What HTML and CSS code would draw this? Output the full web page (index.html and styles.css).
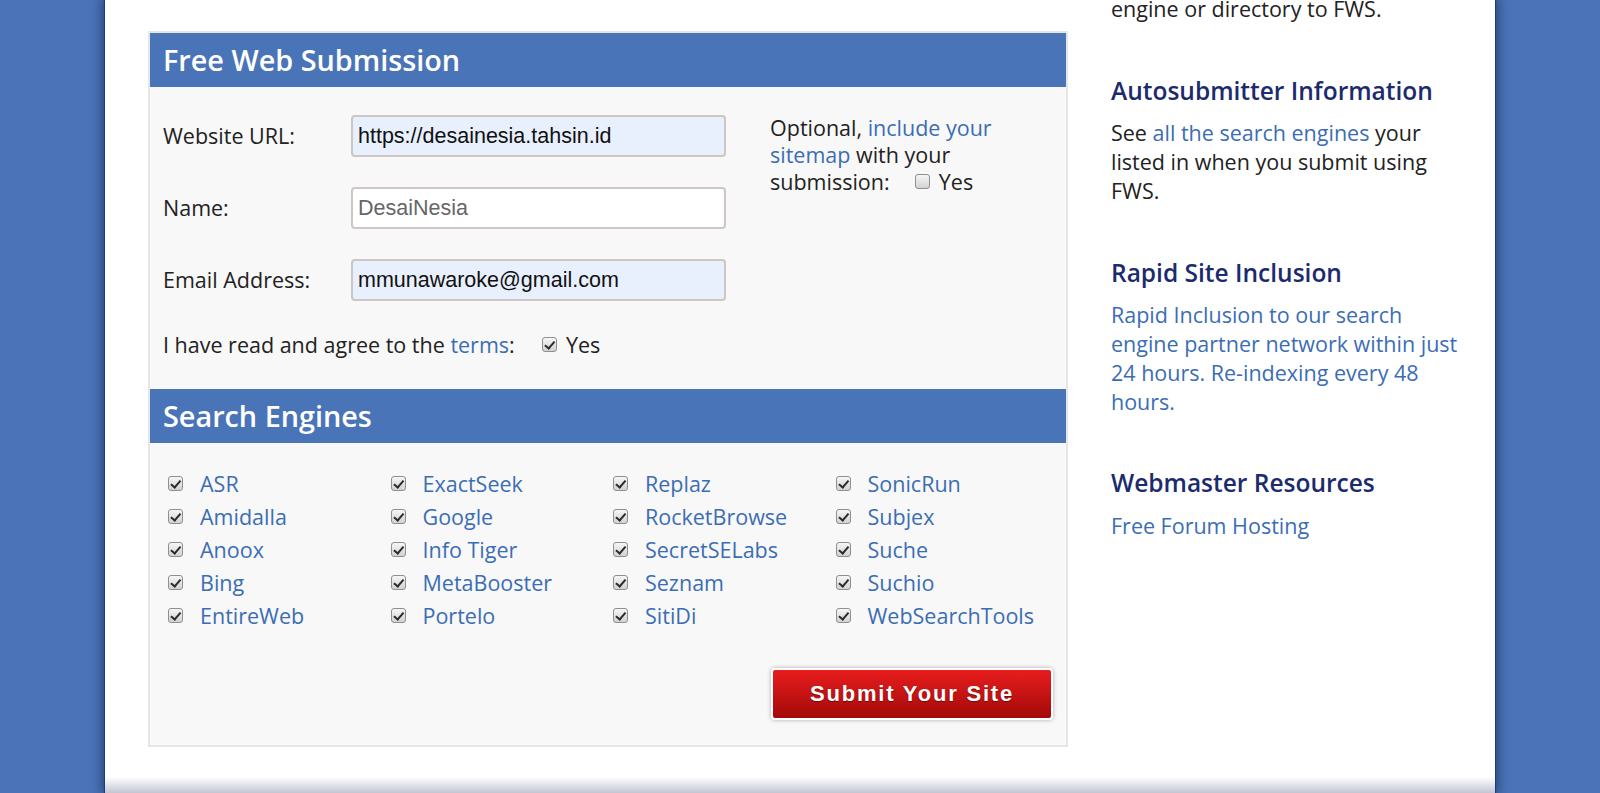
FILE: index.html
```html
<!DOCTYPE html>
<html lang="en">
<head>
  <meta charset="UTF-8">
  <meta name="viewport" content="width=device-width, initial-scale=1.0">
  <link rel="stylesheet" href="styles.css">

  <title>Free Web Submission</title>
</head>
<body>
  <div class="page">
    <div class="content">
      <form class="submit-box" onsubmit="event.preventDefault()">
        <h2 class="box-title">Free Web Submission</h2>

        <div class="details">
          <div class="fields">
            <label for="url">Website URL:</label>
            <input type="text" id="url" class="filled" value="https://desainesia.tahsin.id">

            <label for="name">Name:</label>
            <input type="text" id="name" placeholder="DesaiNesia">

            <label for="email">Email Address:</label>
            <input type="text" id="email" class="filled" value="mmunawaroke@gmail.com">

            <p class="terms">I have read and agree to the <a href="#">terms</a>:
              <input type="checkbox" class="check check-gap" checked> Yes</p>
          </div>

          <p class="sitemap">Optional, <a href="#">include your sitemap</a> with your
            submission: <input type="checkbox" class="check sitemap-check"> Yes</p>
        </div>

        <h2 class="box-title">Search Engines</h2>

        <ul class="engines">
          <li><input type="checkbox" class="check" checked><a href="#">ASR</a></li>
          <li><input type="checkbox" class="check" checked><a href="#">Amidalla</a></li>
          <li><input type="checkbox" class="check" checked><a href="#">Anoox</a></li>
          <li><input type="checkbox" class="check" checked><a href="#">Bing</a></li>
          <li><input type="checkbox" class="check" checked><a href="#">EntireWeb</a></li>
          <li><input type="checkbox" class="check" checked><a href="#">ExactSeek</a></li>
          <li><input type="checkbox" class="check" checked><a href="#">Google</a></li>
          <li><input type="checkbox" class="check" checked><a href="#">Info Tiger</a></li>
          <li><input type="checkbox" class="check" checked><a href="#">MetaBooster</a></li>
          <li><input type="checkbox" class="check" checked><a href="#">Portelo</a></li>
          <li><input type="checkbox" class="check" checked><a href="#">Replaz</a></li>
          <li><input type="checkbox" class="check" checked><a href="#">RocketBrowse</a></li>
          <li><input type="checkbox" class="check" checked><a href="#">SecretSELabs</a></li>
          <li><input type="checkbox" class="check" checked><a href="#">Seznam</a></li>
          <li><input type="checkbox" class="check" checked><a href="#">SitiDi</a></li>
          <li><input type="checkbox" class="check" checked><a href="#">SonicRun</a></li>
          <li><input type="checkbox" class="check" checked><a href="#">Subjex</a></li>
          <li><input type="checkbox" class="check" checked><a href="#">Suche</a></li>
          <li><input type="checkbox" class="check" checked><a href="#">Suchio</a></li>
          <li><input type="checkbox" class="check" checked><a href="#">WebSearchTools</a></li>
        </ul>

        <div class="actions">
          <button type="submit" class="submit-button">Submit Your Site</button>
        </div>
      </form>

      <aside class="sidebar">
        <p class="intro">engine or directory to FWS.</p>

        <h3>Autosubmitter Information</h3>
        <p>See <a href="#">all the search engines</a> your listed in when you submit using FWS.</p>

        <h3>Rapid Site Inclusion</h3>
        <p><a href="#">Rapid Inclusion to our search engine partner network within just 24 hours. Re-indexing every 48 hours.</a></p>

        <h3>Webmaster Resources</h3>
        <p><a href="#">Free Forum Hosting</a></p>
      </aside>
    </div>
    <div class="page-foot"></div>
  </div>
</body>
</html>
```

FILE: styles.css
```css
body {
  margin: 0;
  background-color: #4a74b7;
  font-family: "Open Sans", sans-serif;
  font-size: 21.5px;
  color: #222;
  overflow: hidden;
}

a {
  color: #3b6db5;
  text-decoration: none;
}

.page {
  width: 1390px;
  margin: 0 auto;
  background-color: #fff;
  border-left: 1px solid #1b3a82;
  border-right: 1px solid #1b3a82;
  box-shadow: 0 0 10px 2px rgba(10, 25, 60, 0.55);
}

.content {
  display: flex;
  align-items: flex-start;
  padding: 0 30px 0 43px;
}

/* form box */
.submit-box {
  width: 916px;
  margin: 31px 43px 30px 0;
  border: 2px solid #e6e6e6;
  background-color: #f8f8f8;
}

.box-title {
  margin: 0;
  padding: 8px 13px;
  background-color: #4a74b8;
  color: #fff;
  font-size: 28.8px;
  font-weight: 600;
  line-height: 38px;
}

.details {
  display: flex;
  padding: 28px 0 30px 13px;
}

.fields {
  display: grid;
  grid-template-columns: 188px 375px;
  row-gap: 30px;
  align-items: center;
}

.fields label {
  line-height: 28px;
}

.fields input[type="text"] {
  width: 375px;
  height: 42px;
  box-sizing: border-box;
  padding: 0 5px;
  border: 2px solid #cdc6c2;
  border-radius: 4px;
  background-color: #fff;
  font-family: "Liberation Sans", Arial, sans-serif;
  font-size: 21.5px;
  color: #111;
}

.fields input.filled {
  background-color: #e8f0fe;
}

.fields input::placeholder {
  color: #666;
}

.terms {
  grid-column: 1 / 3;
  margin: 0;
  line-height: 28px;
}

.sitemap {
  width: 270px;
  margin: -1px 0 0 44px;
  line-height: 27px;
}

/* checkboxes */
.check {
  appearance: none;
  -webkit-appearance: none;
  position: relative;
  width: 15px;
  height: 15px;
  margin: 0;
  border: 1px solid #8f8f8f;
  border-radius: 3px;
  background: linear-gradient(#f6f6f6, #d2d2d2);
  vertical-align: 1px;
}

.check:checked::after {
  content: "";
  position: absolute;
  left: 4px;
  top: 1px;
  width: 3.5px;
  height: 7.5px;
  border-right: 2.5px solid #2b2b2b;
  border-bottom: 2.5px solid #2b2b2b;
  transform: rotate(40deg);
}

.check-gap {
  margin-left: 22px;
  margin-right: 3px;
}

.sitemap-check {
  margin-left: 20px;
  margin-right: 3px;
}

/* engine list */
.engines {
  display: grid;
  grid-auto-flow: column;
  grid-template-rows: repeat(5, 33px);
  grid-template-columns: repeat(4, 222.5px);
  margin: 0;
  padding: 24px 0 0 18px;
  list-style: none;
}

.engines li {
  display: flex;
  align-items: center;
}

.engines .check {
  margin-right: 17px;
}

.actions {
  display: flex;
  justify-content: flex-end;
  padding: 36px 13px 25px 0;
}

.submit-button {
  width: 282px;
  height: 52px;
  border: 2px solid #fff;
  border-radius: 4px;
  background: linear-gradient(#e81d1d, #a30909);
  box-shadow: 0 0 4px rgba(0, 0, 0, 0.3);
  color: #fff;
  font-family: "Liberation Sans", Arial, sans-serif;
  font-size: 22px;
  font-weight: bold;
  letter-spacing: 1.8px;
  text-shadow: 0 1px 1px rgba(0, 0, 0, 0.4);
  cursor: pointer;
}

/* right column */
.sidebar {
  width: 354px;
  line-height: 28.8px;
}

.sidebar p {
  margin: 0;
}

.sidebar .intro {
  margin-top: -5px;
}

.sidebar h3 {
  margin: 51px 0 12.5px;
  color: #1b2b6d;
  font-size: 24.5px;
  font-weight: 600;
  line-height: 32px;
}

.page-foot {
  height: 16px;
  background: linear-gradient(#fff, #c3c6d2);
}
```
